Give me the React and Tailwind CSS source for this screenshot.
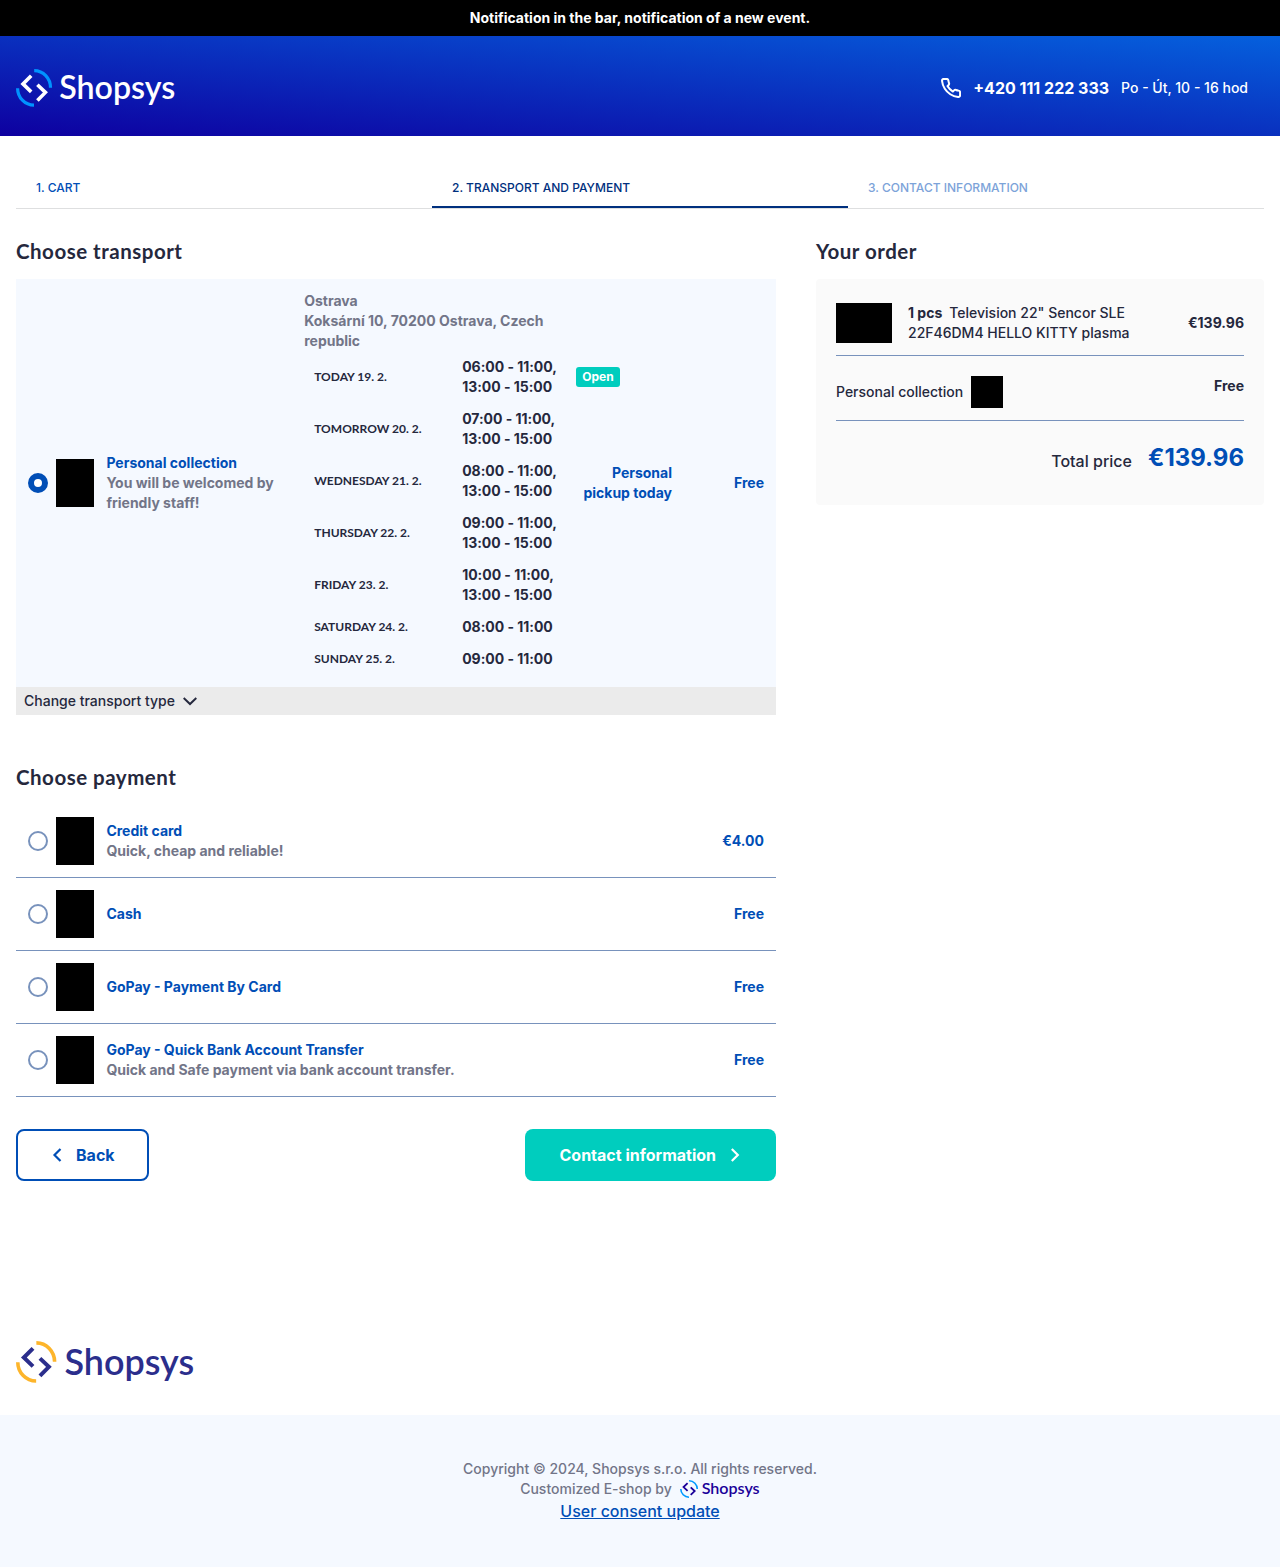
const payments = [
  { name: 'Credit card', note: 'Quick, cheap and reliable!', price: '€4.00' },
  { name: 'Cash', price: 'Free' },
  { name: 'GoPay - Payment By Card', price: 'Free' },
  { name: 'GoPay - Quick Bank Account Transfer', note: 'Quick and Safe payment via bank account transfer.', price: 'Free' },
];

const openingHours = [
  { day: 'Today 19. 2.', hours: ['06:00 - 11:00,', '13:00 - 15:00'], open: true },
  { day: 'Tomorrow 20. 2.', hours: ['07:00 - 11:00,', '13:00 - 15:00'] },
  { day: 'Wednesday 21. 2.', hours: ['08:00 - 11:00,', '13:00 - 15:00'] },
  { day: 'Thursday 22. 2.', hours: ['09:00 - 11:00,', '13:00 - 15:00'] },
  { day: 'Friday 23. 2.', hours: ['10:00 - 11:00,', '13:00 - 15:00'] },
  { day: 'Saturday 24. 2.', hours: ['08:00 - 11:00'] },
  { day: 'Sunday 25. 2.', hours: ['09:00 - 11:00'] },
];

function Logo({ className, ink, accent }) {
  return (
    <svg className={className} viewBox="0 0 160 38" preserveAspectRatio="none" fill="none" overflow="visible" role="img" aria-label="Shopsys">
      <path d="M18.2 1.7A16.3 17 0 0 1 34.5 18.8M1.6 19.2A16.4 17 0 0 0 18 36.2" stroke={accent} strokeWidth="3.2" />
      <path d="M15.2 6.7 7 14.9l8.2 8M21.4 15.7l8 7.7-8 8.1" stroke={ink} strokeWidth="3.6" />
      <text
        x="43.3"
        y="30.4"
        fill={ink}
        textLength="116"
        lengthAdjust="spacingAndGlyphs"
        className="font-[Lato,sans-serif] text-[33px] leading-none font-semibold"
      >
        Shopsys
      </text>
    </svg>
  );
}

function Chevron({ className, d }) {
  return (
    <svg className={className} viewBox="0 0 16 16" fill="none" stroke="currentColor" strokeWidth="2.2">
      <path d={d} />
    </svg>
  );
}

function Heading({ children }) {
  return (
    <h2 className="mb-[15px] font-[Lato,sans-serif] text-[20.5px] leading-[25px] font-bold tracking-[0.5px]">{children}</h2>
  );
}

function Payment({ name, note, price }) {
  return (
    <li className="flex items-center border-b border-[#7892bc] p-3 text-sm font-bold">
      <span className="mr-2 size-5 rounded-full border-2 border-[#7892bc] bg-white" />
      <span className="mr-[12.4px] h-12 w-[38px] bg-black" />
      <span className="flex flex-1 flex-col">
        <span className="text-[#004eb6]">{name}</span>
        {note && <span className="text-[#727588]">{note}</span>}
      </span>
      <span className="text-[#004eb6]">{price}</span>
    </li>
  );
}

export default function App() {
  return (
    <div className="min-h-[1567px] bg-white font-[Inter,sans-serif] font-medium text-[#25283d]">
      <div className="flex h-9 items-center justify-center bg-black text-sm font-bold text-white">
        Notification in the bar, notification of a new event.
      </div>

      <header className="flex h-[100px] items-center justify-between bg-[linear-gradient(to_top_right,#0e00a0,#0560dd)] pr-8 pl-4 text-white">
        <Logo className="mt-1 h-[38px] w-40" ink="#ffffff" accent="#0093ff" />
        <div className="mt-1 flex items-center gap-3">
          <svg className="size-5" viewBox="1 1 22 22" fill="none" stroke="currentColor" strokeWidth="2.2" strokeLinejoin="round">
            <path d="M22 16.92v3a2 2 0 0 1-2.18 2 19.79 19.79 0 0 1-8.63-3.07 19.5 19.5 0 0 1-6-6 19.79 19.79 0 0 1-3.07-8.67A2 2 0 0 1 4.11 2h3a2 2 0 0 1 2 1.72 12.84 12.84 0 0 0 .7 2.81 2 2 0 0 1-.45 2.11L8.09 9.91a16 16 0 0 0 6 6l1.27-1.27a2 2 0 0 1 2.11-.45 12.84 12.84 0 0 0 2.81.7A2 2 0 0 1 22 16.92z" />
          </svg>
          <span className="text-base font-bold">+420 111 222 333</span>
          <span className="text-sm">Po - Út, 10 - 16 hod</span>
        </div>
      </header>

      <main className="px-4">
        <nav className="mt-8 grid h-[41px] grid-cols-3 border-b border-[#dedfe0] text-xs uppercase">
          <span className="px-5 pt-3 text-[#004eb6]">1. Cart</span>
          <span className="border-b-2 border-[#00307e] px-5 pt-3 text-[#00307e]">2. Transport and payment</span>
          <span className="px-5 pt-3 text-[#7ca3d9]">3. Contact information</span>
        </nav>

        <div className="mt-[30px] flex items-start gap-10">
          <div className="w-[760px]">
            <Heading>Choose transport</Heading>
            <div className="flex items-center bg-[#f5f9ff] p-3 text-sm font-bold">
              <span className="mr-2 size-5 rounded-full border-[6px] border-[#004eb6] bg-white" />
              <span className="mr-[12.4px] h-12 w-[38px] bg-black" />
              <span className="mr-4 flex w-[181.8px] flex-col">
                <span className="text-[#004eb6]">Personal collection</span>
                <span className="text-[#727588]">You will be welcomed by friendly staff!</span>
              </span>
              <div className="mr-[15.8px] w-64 shrink-0">
                <p className="text-[#727588]">
                  Ostrava
                  <br />
                  Koksární 10, 70200 Ostrava, Czech republic
                </p>
                {openingHours.map(({ day, hours, open }) => (
                  <div key={day} className="flex items-center py-1.5 pl-2.5">
                    <span className="w-[148px] shrink-0 font-[Lato,sans-serif] text-xs uppercase">{day}</span>
                    <span className="w-[113.8px] shrink-0 tracking-[-0.03px]">
                      {hours.map((h) => (
                        <span key={h} className="block">{h}</span>
                      ))}
                    </span>
                    {open && (
                      <span className="w-11 shrink-0 rounded-[3px] bg-[#00cdbe] text-center text-xs leading-5 text-white">Open</span>
                    )}
                  </div>
                ))}
              </div>
              <span className="w-24 text-right text-[#004eb6]">Personal pickup today</span>
              <span className="flex-1 text-right text-[#004eb6]">Free</span>
            </div>
            <div className="mb-[50px] flex h-7 items-center bg-[#ebebeb] px-2 text-sm">
              Change transport type
              <Chevron className="ml-2 h-[14px] w-[14px] overflow-visible" d="M.8 4.5 8 11.5l7.2-7" />
            </div>

            <Heading>Choose payment</Heading>
            <ul>
              {payments.map((p) => (
                <Payment key={p.name} {...p} />
              ))}
            </ul>

            <div className="mt-8 flex items-center justify-between text-base font-bold">
              <button className="flex h-[52px] w-[133px] items-center rounded-lg border-2 border-[#004eb6] pl-8 text-[#004eb6]">
                <Chevron className="mr-2.5 size-4" d="M10.5 2 4.5 8l6 6" />
                Back
              </button>
              <button className="flex h-[52px] w-[251px] items-center rounded-lg bg-[#00cdbe] pl-[34.5px] text-white">
                Contact information
                <Chevron className="ml-[9.5px] size-4" d="m5.8 2 6 6-6 6" />
              </button>
            </div>
          </div>

          <aside className="w-[448px]">
            <Heading>Your order</Heading>
            <div className="h-[226px] rounded bg-[#fafafa] px-5 pt-6 text-sm">
              <div className="flex items-center border-b border-[#7892bc] pb-3">
                <span className="mr-4 h-10 w-14 bg-black" />
                <span className="w-[240px]">
                  <b className="mr-[7px]">1 pcs</b>Television 22" Sencor SLE 22F46DM4 HELLO KITTY plasma
                </span>
                <b className="ml-auto">€139.96</b>
              </div>
              <div className="flex items-start justify-between border-b border-[#7892bc] pt-5 pb-3">
                <span className="flex items-center gap-2">
                  Personal collection
                  <span className="size-8 bg-black" />
                </span>
                <b>Free</b>
              </div>
              <div className="mt-[21px] flex items-end justify-end gap-4 text-base">
                <span className="mb-px">Total price</span>
                <span className="text-2xl font-bold text-[#004eb6]">€139.96</span>
              </div>
            </div>
          </aside>
        </div>
      </main>

      <footer className="mt-40">
        <Logo className="ml-4 h-[42px] w-[179px]" ink="#2b2e8c" accent="#fdb52b" />
        <div className="mt-8 flex h-[152px] flex-col items-center bg-[#f5f9ff] pt-11 text-sm text-[#727588]">
          <span>Copyright © 2024, Shopsys s.r.o. All rights reserved.</span>
          <span className="flex h-5 items-center gap-2">
            Customized E-shop by
            <Logo className="h-[18px] w-20" ink="#1a0099" accent="#009aff" />
          </span>
          <a className="text-base leading-6 text-[#004eb6] underline">User consent update</a>
        </div>
      </footer>
    </div>
  );
}
